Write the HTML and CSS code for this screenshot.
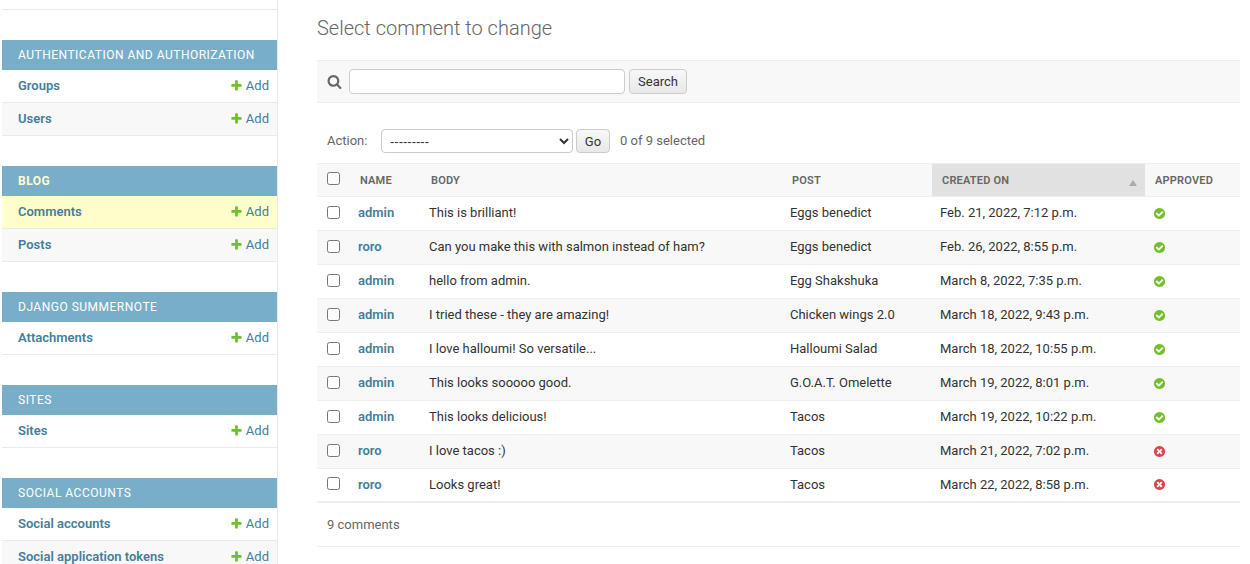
FILE: index.html
```html
<!DOCTYPE html>
<html lang="en">
<head>
    <meta charset="UTF-8">
    <meta name="viewport" content="width=device-width, initial-scale=1.0">
    <title>Select comment to change</title>
    <link rel="stylesheet" href="styles.css">
</head>
<body>
  <svg class="sprites" width="0" height="0" aria-hidden="true">
    <symbol id="icon-add" viewBox="0 0 1792 1792"><path fill="#70bf2b" d="M1600 796v192q0 40-28 68t-68 28h-416v416q0 40-28 68t-68 28h-192q-40 0-68-28t-28-68v-416h-416q-40 0-68-28t-28-68v-192q0-40 28-68t68-28h416v-416q0-40 28-68t68-28h192q40 0 68 28t28 68v416h416q40 0 68 28t28 68z"/></symbol>
    <symbol id="icon-yes" viewBox="0 0 1792 1792"><path fill="#70bf2b" d="M1412 734q0-28-18-46l-91-90q-19-19-45-19t-45 19l-408 407-226-226q-19-19-45-19t-45 19l-91 90q-18 18-18 46 0 27 18 45l362 362q19 19 45 19 27 0 46-19l543-543q18-18 18-45zm252 162q0 209-103 385.500t-279.500 279.500-385.500 103-385.500-103-279.500-279.500-103-385.500 103-385.500 279.500-279.500 385.500-103 385.500 103 279.500 279.500 103 385.500z"/></symbol>
    <symbol id="icon-no" viewBox="0 0 1792 1792"><path fill="#dd4646" d="M1277 1122q0-26-19-45l-181-181 181-181q19-19 19-45 0-27-19-46l-90-90q-19-19-46-19-26 0-45 19l-181 181-181-181q-19-19-45-19-27 0-46 19l-90 90q-19 19-19 46 0 26 19 45l181 181-181 181q-19 19-19 45 0 27 19 46l90 90q19 19 46 19 26 0 45-19l181-181 181 181q19 19 45 19 27 0 46-19l90-90q19-19 19-46zm387-226q0 209-103 385.500t-279.500 279.500-385.500 103-385.500-103-279.500-279.500-103-385.500 103-385.500 279.500-279.500 385.500-103 385.500 103 279.500 279.500 103 385.500z"/></symbol>
  </svg>

  <div class="layout">
    <nav class="sidebar">
      <div class="top-stub"></div>

      <div class="module">
        <div class="module-title">Authentication and Authorization</div>
        <div class="module-row"><a class="model" href="#">Groups</a><a class="add" href="#"><svg class="add-icon"><use href="#icon-add"/></svg>Add</a></div>
        <div class="module-row alt"><a class="model" href="#">Users</a><a class="add" href="#"><svg class="add-icon"><use href="#icon-add"/></svg>Add</a></div>
      </div>

      <div class="module">
        <div class="module-title current-app">Blog</div>
        <div class="module-row current"><a class="model" href="#">Comments</a><a class="add" href="#"><svg class="add-icon"><use href="#icon-add"/></svg>Add</a></div>
        <div class="module-row alt"><a class="model" href="#">Posts</a><a class="add" href="#"><svg class="add-icon"><use href="#icon-add"/></svg>Add</a></div>
      </div>

      <div class="module">
        <div class="module-title">Django Summernote</div>
        <div class="module-row"><a class="model" href="#">Attachments</a><a class="add" href="#"><svg class="add-icon"><use href="#icon-add"/></svg>Add</a></div>
      </div>

      <div class="module">
        <div class="module-title">Sites</div>
        <div class="module-row"><a class="model" href="#">Sites</a><a class="add" href="#"><svg class="add-icon"><use href="#icon-add"/></svg>Add</a></div>
      </div>

      <div class="module">
        <div class="module-title">Social Accounts</div>
        <div class="module-row"><a class="model" href="#">Social accounts</a><a class="add" href="#"><svg class="add-icon"><use href="#icon-add"/></svg>Add</a></div>
        <div class="module-row alt"><a class="model" href="#">Social application tokens</a><a class="add" href="#"><svg class="add-icon"><use href="#icon-add"/></svg>Add</a></div>
      </div>
    </nav>

    <main class="content">
      <h1>Select comment to change</h1>

      <form class="toolbar">
        <svg class="search-icon" viewBox="0 0 1792 1792"><path fill="#666" d="M1216 832q0-185-131.500-316.500t-316.500-131.500-316.500 131.500-131.500 316.500 131.500 316.500 316.500 131.500 316.500-131.500 131.500-316.500zm512 832q0 52-38 90t-90 38q-54 0-90-38l-343-342q-179 124-399 124-143 0-273.500-55.500t-225-150-150-225-55.500-273.500 55.500-273.500 150-225 225-150 273.500-55.500 273.500 55.500 225 150 150 225 55.500 273.500q0 220-124 399l343 343q37 37 37 90z"/></svg>
        <input class="search-input" type="text">
        <button class="btn search-btn" type="button">Search</button>
      </form>

      <div class="actions">
        <label class="action-label" for="action">Action:</label>
        <select id="action" class="action-select"><option>---------</option></select>
        <button class="btn go-btn" type="button">Go</button>
        <span class="selected-count">0 of 9 selected</span>
      </div>

      <table class="results">
        <thead>
          <tr>
            <th class="col-check"><input type="checkbox"></th>
            <th class="col-name">Name</th>
            <th class="col-body">Body</th>
            <th class="col-post">Post</th>
            <th class="col-created sorted">Created on<span class="sort-arrow"></span></th>
            <th class="col-approved">Approved</th>
          </tr>
        </thead>
        <tbody>
          <tr><td><input type="checkbox"></td><td><a href="#">admin</a></td><td>This is brilliant!</td><td>Eggs benedict</td><td>Feb. 21, 2022, 7:12 p.m.</td><td><svg class="status"><use href="#icon-yes"/></svg></td></tr>
          <tr><td><input type="checkbox"></td><td><a href="#">roro</a></td><td>Can you make this with salmon instead of ham?</td><td>Eggs benedict</td><td>Feb. 26, 2022, 8:55 p.m.</td><td><svg class="status"><use href="#icon-yes"/></svg></td></tr>
          <tr><td><input type="checkbox"></td><td><a href="#">admin</a></td><td>hello from admin.</td><td>Egg Shakshuka</td><td>March 8, 2022, 7:35 p.m.</td><td><svg class="status"><use href="#icon-yes"/></svg></td></tr>
          <tr><td><input type="checkbox"></td><td><a href="#">admin</a></td><td>I tried these - they are amazing!</td><td>Chicken wings 2.0</td><td>March 18, 2022, 9:43 p.m.</td><td><svg class="status"><use href="#icon-yes"/></svg></td></tr>
          <tr><td><input type="checkbox"></td><td><a href="#">admin</a></td><td>I love halloumi! So versatile...</td><td>Halloumi Salad</td><td>March 18, 2022, 10:55 p.m.</td><td><svg class="status"><use href="#icon-yes"/></svg></td></tr>
          <tr><td><input type="checkbox"></td><td><a href="#">admin</a></td><td>This looks sooooo good.</td><td>G.O.A.T. Omelette</td><td>March 19, 2022, 8:01 p.m.</td><td><svg class="status"><use href="#icon-yes"/></svg></td></tr>
          <tr><td><input type="checkbox"></td><td><a href="#">admin</a></td><td>This looks delicious!</td><td>Tacos</td><td>March 19, 2022, 10:22 p.m.</td><td><svg class="status"><use href="#icon-yes"/></svg></td></tr>
          <tr><td><input type="checkbox"></td><td><a href="#">roro</a></td><td>I love tacos :)</td><td>Tacos</td><td>March 21, 2022, 7:02 p.m.</td><td><svg class="status"><use href="#icon-no"/></svg></td></tr>
          <tr><td><input type="checkbox"></td><td><a href="#">roro</a></td><td>Looks great!</td><td>Tacos</td><td>March 22, 2022, 8:58 p.m.</td><td><svg class="status"><use href="#icon-no"/></svg></td></tr>
        </tbody>
      </table>

      <p class="paginator">9 comments</p>
    </main>
  </div>
</body>
</html>
```

FILE: styles.css
```css
html, body {
    height: 100%;
}
body {
    font-family: Roboto, "Liberation Sans", sans-serif;
    font-size: 13px;
    color: #333;
    margin: 0;
    padding: 0;
    background-color: #fff;
    overflow: hidden;
}
a {
    color: #447e9b;
    text-decoration: none;
}
.sprites {
    display: block;
}
.layout {
    display: flex;
    height: 564px;
    overflow: hidden;
}

/* sidebar */
.sidebar {
    flex: none;
    width: 275px;
    margin-left: 2px;
    border-right: 1px solid #eaeaea;
}
.top-stub {
    height: 9px;
    border-bottom: 1px solid #eaeaea;
    margin-bottom: 30px;
}
.module {
    margin-bottom: 30px;
}
.module-title {
    height: 30px;
    line-height: 30px;
    padding-left: 16px;
    background-color: #79aec8;
    color: #fff;
    font-size: 12px;
    font-weight: 400;
    letter-spacing: 0.5px;
    text-transform: uppercase;
}
.module-title.current-app {
    color: #ffc;
    font-weight: 700;
}
.module-row {
    display: flex;
    justify-content: space-between;
    align-items: center;
    height: 30px;
    padding: 0 8px 2px 16px;
    border-bottom: 1px solid #eaeaea;
}
.module-row.alt {
    background-color: #f8f8f8;
}
.module-row.current {
    background-color: #ffc;
}
.model {
    font-weight: 600;
}
.add {
    display: flex;
    align-items: center;
}
.add-icon {
    width: 13px;
    height: 13px;
    margin-right: 3px;
}

/* main column */
.content {
    flex: 1;
    min-width: 0;
    padding: 0 10px 0 39px;
}
h1 {
    margin: 0;
    padding-top: 16px;
    height: 60px;
    box-sizing: border-box;
    font-size: 20px;
    line-height: 24px;
    font-weight: 300;
    color: #666;
}
.toolbar {
    display: flex;
    align-items: center;
    height: 41px;
    margin: 0;
    padding-left: 10px;
    background-color: #f8f8f8;
    border-top: 1px solid #eee;
    border-bottom: 1px solid #eee;
}
.search-icon {
    width: 15px;
    height: 15px;
    margin-right: 7px;
}
.search-input {
    width: 276px;
    height: 25px;
    box-sizing: border-box;
    padding: 2px 5px;
    border: 1px solid #ccc;
    border-radius: 4px;
    background-color: #fff;
    margin: 0;
}
.btn {
    font-family: Roboto, "Liberation Sans", sans-serif;
    font-size: 13px;
    color: #333;
    height: 25px;
    padding: 0 8px;
    margin: 0;
    border: 1px solid #ccc;
    border-radius: 4px;
    background: linear-gradient(#f8f8f8, #e8e8e8);
    cursor: pointer;
}
.search-btn {
    margin-left: 4px;
    width: 58px;
}
.actions {
    display: flex;
    align-items: center;
    height: 24px;
    margin-top: 26px;
    margin-bottom: 10px;
    padding-left: 10px;
    color: #666;
}
.action-label {
    width: 54px;
    padding-bottom: 2px;
}
.action-select {
    width: 192px;
    height: 24px;
    padding: 0 4px;
    border: 1px solid #ccc;
    border-radius: 4px;
    background-color: #fff;
    font-family: "Liberation Sans", sans-serif;
    font-size: 13px;
    color: #333;
}
.go-btn {
    width: 34px;
    height: 24px;
    margin-left: 3px;
    padding: 0;
}
.selected-count {
    margin-left: 10px;
    padding-bottom: 2px;
}

/* change list */
.results {
    width: 923px;
    table-layout: fixed;
    border-collapse: separate;
    border-spacing: 0;
}
.results input[type="checkbox"] {
    display: block;
    margin: -1px 0 0;
}
.results th input[type="checkbox"] {
    margin-top: -3px;
}
th {
    height: 34px;
    padding: 0 0 0 10px;
    box-sizing: border-box;
    border-top: 1px solid #eee;
    border-bottom: 1px solid #eee;
    background-color: #f8f8f8;
    color: #666;
    font-size: 11px;
    font-weight: 600;
    letter-spacing: 0.2px;
    text-align: left;
    text-transform: uppercase;
    position: relative;
}
th.col-check {
    width: 33px;
}
th.col-name {
    width: 71px;
}
th.col-body {
    width: 361px;
}
th.col-post {
    width: 150px;
}
th.col-created {
    width: 213px;
}
th.sorted {
    background-color: #e1e1e1;
}
.sort-arrow {
    position: absolute;
    right: 8px;
    top: 16px;
    border-left: 4.5px solid transparent;
    border-right: 4.5px solid transparent;
    border-bottom: 6px solid #aaa;
}
td {
    height: 34px;
    padding: 0 0 2px 8px;
    box-sizing: border-box;
    border-bottom: 1px solid #eee;
    vertical-align: middle;
}
td:first-child {
    padding-left: 10px;
}
tbody td a {
    font-weight: 600;
}
tbody tr:nth-child(even) td {
    background-color: #f8f8f8;
}
tbody tr:last-child td {
    border-bottom: 2px solid #eee;
}
.status {
    display: block;
    width: 13px;
    height: 13px;
    margin: 1px 0 0;
}
.paginator {
    margin: 0;
    height: 43px;
    line-height: 43px;
    padding-left: 10px;
    color: #666;
    border-bottom: 1px solid #eee;
}
```
